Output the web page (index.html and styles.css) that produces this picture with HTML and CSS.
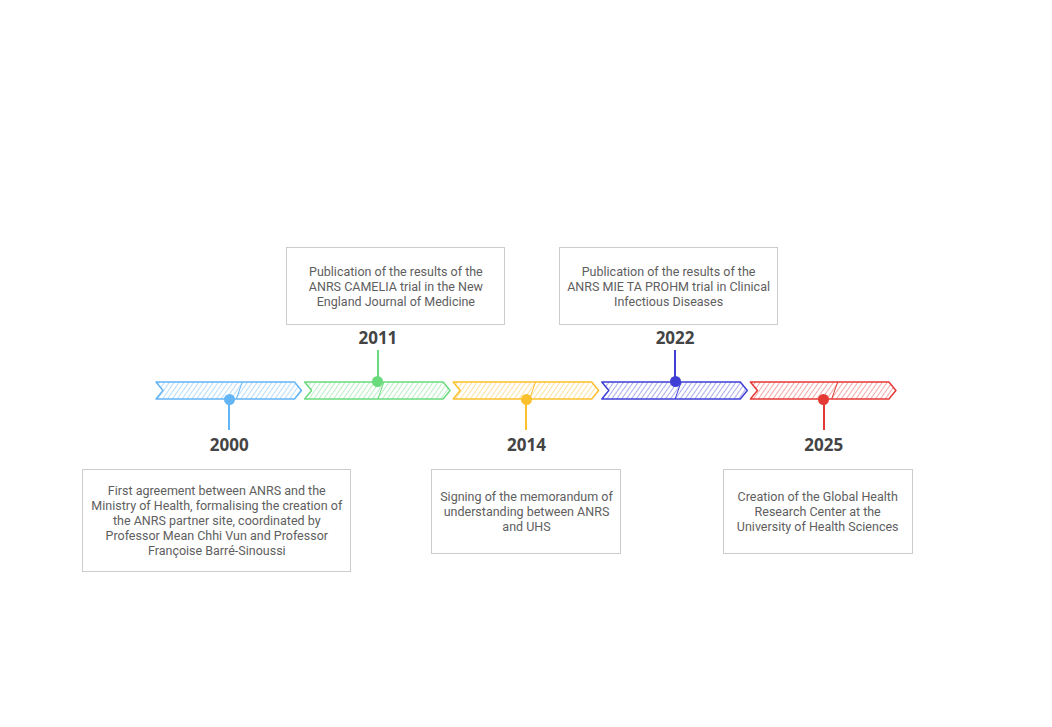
FILE: index.html
```html
<!DOCTYPE html>
<html lang="en">
<head>
<meta charset="utf-8">
<title>ANRS timeline</title>
<link rel="stylesheet" href="styles.css">
</head>
<body>
<main class="page">
  <section class="timeline">
    <div class="milestone milestone--up col-2">
      <div class="card card--top shift-2011">Publication of the results of the ANRS CAMELIA trial in the New England Journal of Medicine</div>
      <div class="year">2011</div>
      <div class="stem stem--up green"></div>
    </div>
    <div class="milestone milestone--up col-4">
      <div class="card card--top shift-2022">Publication of the results of the ANRS MIE TA PROHM trial in Clinical Infectious Diseases</div>
      <div class="year">2022</div>
      <div class="stem stem--up indigo"></div>
    </div>

    <svg class="track" viewBox="0 0 743 19" width="743" height="19" aria-hidden="true">
      <defs>
        <pattern id="h-blue" width="4" height="4" patternUnits="userSpaceOnUse" patternTransform="rotate(35)"><line x1="0" y1="0" x2="0" y2="4" stroke="#64b5f6" stroke-width="1.1" opacity="0.85"/></pattern>
        <pattern id="h-green" width="4" height="4" patternUnits="userSpaceOnUse" patternTransform="rotate(35)"><line x1="0" y1="0" x2="0" y2="4" stroke="#69db7c" stroke-width="1.1" opacity="0.85"/></pattern>
        <pattern id="h-yellow" width="4" height="4" patternUnits="userSpaceOnUse" patternTransform="rotate(35)"><line x1="0" y1="0" x2="0" y2="4" stroke="#fbc02d" stroke-width="1.1" opacity="0.85"/></pattern>
        <pattern id="h-indigo" width="4" height="4" patternUnits="userSpaceOnUse" patternTransform="rotate(35)"><line x1="0" y1="0" x2="0" y2="4" stroke="#3f3fd6" stroke-width="1.1" opacity="0.8"/></pattern>
        <pattern id="h-red" width="4" height="4" patternUnits="userSpaceOnUse" patternTransform="rotate(35)"><line x1="0" y1="0" x2="0" y2="4" stroke="#e53935" stroke-width="1.1" opacity="0.8"/></pattern>
      </defs>
      <path d="M1,1 H139.5 L146.5,9.5 L139.5,18 H1 L8,9.5 Z" fill="url(#h-blue)" stroke="#64b5f6" stroke-width="1.5" stroke-linejoin="round"/>
      <line x1="87.3" y1="1" x2="81.3" y2="18" stroke="#64b5f6" stroke-width="1"/>
      <path d="M149.6,1 H288.1 L295.1,9.5 L288.1,18 H149.6 L156.6,9.5 Z" fill="url(#h-green)" stroke="#69db7c" stroke-width="1.5" stroke-linejoin="round"/>
      <line x1="228.9" y1="1" x2="222.9" y2="18" stroke="#69db7c" stroke-width="1"/>
      <path d="M298.2,1 H436.7 L443.7,9.5 L436.7,18 H298.2 L305.2,9.5 Z" fill="url(#h-yellow)" stroke="#fbc02d" stroke-width="1.5" stroke-linejoin="round"/>
      <line x1="380.5" y1="1" x2="374.5" y2="18" stroke="#fbc02d" stroke-width="1"/>
      <path d="M446.8,1 H585.3 L592.3,9.5 L585.3,18 H446.8 L453.8,9.5 Z" fill="url(#h-indigo)" stroke="#3f3fd6" stroke-width="1.5" stroke-linejoin="round"/>
      <line x1="526.1" y1="1" x2="520.1" y2="18" stroke="#3f3fd6" stroke-width="1"/>
      <path d="M595.4,1 H733.9 L740.9,9.5 L733.9,18 H595.4 L602.4,9.5 Z" fill="url(#h-red)" stroke="#e53935" stroke-width="1.5" stroke-linejoin="round"/>
      <line x1="682.7" y1="1" x2="676.7" y2="18" stroke="#e53935" stroke-width="1"/>
    </svg>

    <div class="milestone milestone--down col-1">
      <div class="stem stem--down blue"></div>
      <div class="year">2000</div>
      <div class="card card--wide shift-2000">First agreement between ANRS and the Ministry of Health, formalising the creation of the ANRS partner site, coordinated by Professor Mean Chhi Vun and Professor Françoise Barré-Sinoussi</div>
    </div>
    <div class="milestone milestone--down col-3">
      <div class="stem stem--down yellow"></div>
      <div class="year">2014</div>
      <div class="card card--small">Signing of the memorandum of understanding between ANRS and UHS</div>
    </div>
    <div class="milestone milestone--down col-5">
      <div class="stem stem--down red"></div>
      <div class="year">2025</div>
      <div class="card card--small shift-2025">Creation of the Global Health Research Center at the University of Health Sciences</div>
    </div>
  </section>
</main>
</body>
</html>
```

FILE: styles.css
```css
html, body {
  margin: 0;
  padding: 0;
  background: #ffffff;
}

.page {
  width: 1052px;
  height: 727px;
  box-sizing: border-box;
  padding: 247px 0 0 155px;
  overflow: hidden;
}

.timeline {
  display: grid;
  grid-template-columns: repeat(5, 148.6px);
  grid-template-rows: auto 19px auto;
}

.col-1 { grid-column: 1; }
.col-2 { grid-column: 2; }
.col-3 { grid-column: 3; }
.col-4 { grid-column: 4; }
.col-5 { grid-column: 5; }

.milestone {
  display: flex;
  flex-direction: column;
  align-items: center;
}

.milestone--up {
  grid-row: 1;
  align-self: end;
}

.milestone--down {
  grid-row: 3;
  align-self: start;
}

.track {
  grid-row: 2;
  grid-column: 1 / -1;
  display: block;
}

.card {
  box-sizing: border-box;
  flex: none;
  display: flex;
  align-items: center;
  justify-content: center;
  padding: 0 6px;
  border: 1px solid #cccccc;
  background: #ffffff;
  font-family: Roboto, "Liberation Sans", sans-serif;
  font-size: 12.5px;
  line-height: 15px;
  color: #5e5e5e;
  text-align: center;
}

.card--top {
  width: 219px;
  height: 78px;
}

.card--wide {
  width: 269px;
  height: 103px;
}

.card--small {
  width: 190px;
  height: 85px;
}

.shift-2011 { margin-left: 36px; }
.shift-2022 { margin-right: 13px; }
.shift-2000 { margin-right: 25px; }
.shift-2025 { margin-right: 12px; }

.year {
  font-family: "Open Sans", "Noto Sans", sans-serif;
  font-weight: 700;
  font-size: 17px;
  line-height: 20px;
  color: #444444;
}

.milestone--up .year {
  margin: 3px 0 2px;
}

.milestone--down .year {
  margin: 5px 0 14px;
}

.stem {
  position: relative;
  width: 2px;
}

.stem::after {
  content: "";
  position: absolute;
  left: 50%;
  width: 11px;
  height: 11px;
  margin-left: -5.5px;
  border-radius: 50%;
  background: inherit;
}

.stem--up {
  height: 31px;
}

.stem--up::after {
  bottom: -6px;
}

.stem--down {
  height: 30px;
}

.stem--down::after {
  top: -6px;
}

.blue { background: #64b5f6; }
.green { background: #69db7c; }
.yellow { background: #fbc02d; }
.indigo { background: #3f3fd6; }
.red { background: #e53935; }
```
